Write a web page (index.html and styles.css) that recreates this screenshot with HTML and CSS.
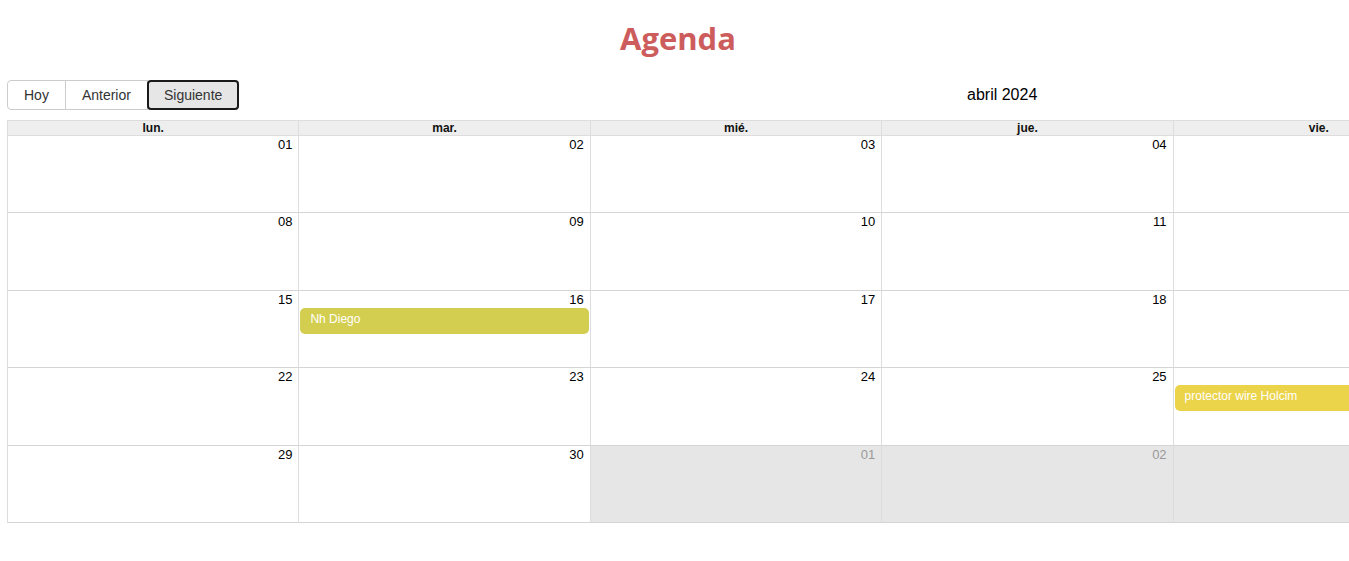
FILE: index.html
```html
<!DOCTYPE html>
<html lang="es">
<head>
<meta charset="utf-8">
<title>Agenda</title>
<link rel="stylesheet" href="styles.css">
</head>
<body>
<div class="page">
  <h1 class="page-title">Agenda</h1>
  <div class="toolbar">
    <div class="btn-group">
      <button class="btn btn-first">Hoy</button>
      <button class="btn">Anterior</button>
      <button class="btn btn-active btn-last">Siguiente</button>
    </div>
    <h2 class="month-title">abril 2024</h2>
    <div class="toolbar-right"></div>
  </div>
  <div class="calendar">
    <div class="head">
      <div class="head-cell">lun.</div>
      <div class="head-cell">mar.</div>
      <div class="head-cell">mié.</div>
      <div class="head-cell">jue.</div>
      <div class="head-cell">vie.</div>
    </div>
    <div class="body">
      <div class="day"><span class="num">01</span></div>
      <div class="day"><span class="num">02</span></div>
      <div class="day"><span class="num">03</span></div>
      <div class="day"><span class="num">04</span></div>
      <div class="day"><span class="num">05</span></div>

      <div class="day"><span class="num">08</span></div>
      <div class="day"><span class="num">09</span></div>
      <div class="day"><span class="num">10</span></div>
      <div class="day"><span class="num">11</span></div>
      <div class="day"><span class="num">12</span></div>

      <div class="day"><span class="num">15</span></div>
      <div class="day"><span class="num">16</span><div class="event event-olive">Nh Diego</div></div>
      <div class="day"><span class="num">17</span></div>
      <div class="day"><span class="num">18</span></div>
      <div class="day"><span class="num">19</span></div>

      <div class="day"><span class="num">22</span></div>
      <div class="day"><span class="num">23</span></div>
      <div class="day"><span class="num">24</span></div>
      <div class="day"><span class="num">25</span></div>
      <div class="day"><span class="num">26</span><div class="event event-yellow">protector wire Holcim</div></div>

      <div class="day"><span class="num">29</span></div>
      <div class="day"><span class="num">30</span></div>
      <div class="day other"><span class="num">01</span></div>
      <div class="day other"><span class="num">02</span></div>
      <div class="day other"><span class="num">03</span></div>
    </div>
  </div>
</div>
</body>
</html>
```

FILE: styles.css
```css
html, body {
  margin: 0;
  padding: 0;
  overflow: hidden;
  background: #fff;
}

body {
  font-family: "Liberation Sans", Arial, sans-serif;
  color: #000;
}

.page {
  padding: 0 0 0 7px;
  width: 1760px;
}

.page-title {
  margin: 0;
  width: 1342px;
  padding-top: 17px;
  height: 63px;
  box-sizing: border-box;
  text-align: center;
  font-family: "Open Sans", "Noto Sans", sans-serif;
  font-weight: 700;
  font-size: 31px;
  line-height: 42px;
  color: #cd5c5c;
}

.toolbar {
  width: 1758px;
  height: 30px;
  display: flex;
  justify-content: space-between;
  align-items: center;
  margin-top: 17px;
}

.btn-group {
  display: flex;
  height: 30px;
}

.btn {
  font-family: "Liberation Sans", Arial, sans-serif;
  font-size: 14px;
  color: #333;
  background: #fff;
  border: 1px solid #ccc;
  margin: 0 0 0 -1px;
  padding: 0 16px;
  height: 30px;
  cursor: pointer;
}

.btn-first {
  margin-left: 0;
  border-radius: 4px 0 0 4px;
}

.btn-last {
  border-radius: 0 4px 4px 0;
}

.btn-active {
  background: #e6e6e6;
  border: 2px solid #1a1a1a;
  border-radius: 4px;
  padding: 0 15px;
}

.month-title {
  margin: 0;
  font-size: 16px;
  font-weight: 400;
  line-height: 30px;
  color: #000;
}

.toolbar-right {
  width: 0;
}

.calendar {
  margin-top: 10px;
  width: 1457px;
  border-left: 1px solid #ddd;
}

.head {
  display: grid;
  grid-template-columns: repeat(5, 1fr);
  background: #eee;
  border-top: 1px solid #ddd;
}

.head-cell {
  font-size: 12px;
  font-weight: 700;
  text-align: center;
  height: 14px;
  line-height: 14px;
  border-right: 1px solid #ddd;
  border-bottom: 1px solid #ddd;
  color: #111;
}

.body {
  display: grid;
  grid-template-columns: repeat(5, 1fr);
  grid-auto-rows: 77.4px;
}

.day {
  border-right: 1px solid #ddd;
  border-bottom: 1px solid #d4d4d4;
  display: flex;
  flex-direction: column;
  align-items: stretch;
  box-sizing: border-box;
}

.num {
  align-self: flex-end;
  font-size: 13px;
  line-height: 15px;
  padding: 1px 6px 0 0;
  color: #000;
}

.other {
  background: #e6e6e6;
}

.other .num {
  color: #999;
}

.event {
  margin: 1px 1px 0 1px;
  height: 26px;
  border-radius: 5px;
  color: #fff;
  font-size: 12px;
  font-weight: 400;
  line-height: 22px;
  padding: 0 10px;
}

.event-olive {
  background: #d4ce50;
}

.event-yellow {
  background: #ebd34a;
}
```
